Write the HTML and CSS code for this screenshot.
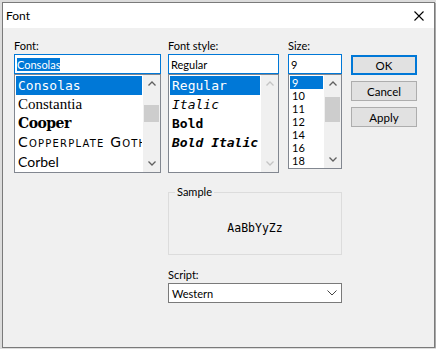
FILE: index.html
```html
<!DOCTYPE html>
<html lang="en">
<head>
    <meta charset="UTF-8">
    <title>Font</title>
    <link rel="stylesheet" href="styles.css">
</head>
<body>
    <div class="dialog">
        <div class="titlebar">
            <span class="title">Font</span>
            <svg class="close" width="10" height="10" viewBox="0 0 10 10">
                <path d="M0.5 0.5 L9.5 9.5 M9.5 0.5 L0.5 9.5" stroke="#000" stroke-width="1.1" fill="none"/>
            </svg>
        </div>
        <div class="content">
            <div class="top">
                <div class="col col-font">
                    <label>Font:</label>
                    <div class="field"><span class="sel">Consolas</span></div>
                    <div class="list list-font">
                        <ul class="items">
                            <li class="active f-consolas">Consolas</li>
                            <li class="f-constantia">Constantia</li>
                            <li class="f-cooper">Cooper</li>
                            <li class="f-copper">Copperplate Gothic</li>
                            <li class="f-corbel">Corbel</li>
                        </ul>
                        <div class="scroll">
                            <div class="arrow"><svg width="8" height="5" viewBox="0 0 8 5"><path d="M0.5 4.5 L4 1 L7.5 4.5" stroke="#606060" stroke-width="1.3" fill="none"/></svg></div>
                            <div class="track"><div class="thumb thumb-font"></div></div>
                            <div class="arrow"><svg width="8" height="5" viewBox="0 0 8 5"><path d="M0.5 0.5 L4 4 L7.5 0.5" stroke="#606060" stroke-width="1.3" fill="none"/></svg></div>
                        </div>
                    </div>
                </div>
                <div class="col col-style">
                    <label>Font style:</label>
                    <div class="field">Regular</div>
                    <div class="list list-style">
                        <ul class="items mono">
                            <li class="active">Regular</li>
                            <li class="i">Italic</li>
                            <li class="b">Bold</li>
                            <li class="b i">Bold Italic</li>
                        </ul>
                        <div class="scroll">
                            <div class="arrow"><svg width="8" height="5" viewBox="0 0 8 5"><path d="M0.5 4.5 L4 1 L7.5 4.5" stroke="#c4c4c4" stroke-width="1.3" fill="none"/></svg></div>
                            <div class="track"></div>
                            <div class="arrow"><svg width="8" height="5" viewBox="0 0 8 5"><path d="M0.5 0.5 L4 4 L7.5 0.5" stroke="#c4c4c4" stroke-width="1.3" fill="none"/></svg></div>
                        </div>
                    </div>
                </div>
                <div class="col col-size">
                    <label>Size:</label>
                    <div class="field">9</div>
                    <div class="list list-size">
                        <ul class="items">
                            <li class="active">9</li>
                            <li>10</li>
                            <li>11</li>
                            <li>12</li>
                            <li>14</li>
                            <li>16</li>
                            <li>18</li>
                        </ul>
                        <div class="scroll">
                            <div class="arrow"><svg width="8" height="5" viewBox="0 0 8 5"><path d="M0.5 4.5 L4 1 L7.5 4.5" stroke="#606060" stroke-width="1.3" fill="none"/></svg></div>
                            <div class="track"><div class="thumb thumb-size"></div></div>
                            <div class="arrow"><svg width="8" height="5" viewBox="0 0 8 5"><path d="M0.5 0.5 L4 4 L7.5 0.5" stroke="#606060" stroke-width="1.3" fill="none"/></svg></div>
                        </div>
                    </div>
                </div>
                <div class="buttons">
                    <button class="default">OK</button>
                    <button>Cancel</button>
                    <button>Apply</button>
                </div>
            </div>
            <div class="lower">
                <fieldset class="sample">
                    <legend>Sample</legend>
                    <div class="sample-text">AaBbYyZz</div>
                </fieldset>
                <label class="script-label">Script:</label>
                <div class="combo">
                    <span>Western</span>
                    <svg width="10" height="6" viewBox="0 0 10 6"><path d="M0.5 0.5 L5 5 L9.5 0.5" stroke="#444" stroke-width="1" fill="none"/></svg>
                </div>
            </div>
        </div>
    </div>
</body>
</html>
```

FILE: styles.css
```css
body {
    margin: 0;
    background-color: #dcdcdc;
    font-family: Lato, "Noto Sans", sans-serif;
    font-size: 11px;
    color: #000;
}
.dialog {
    margin: 2px 0 0 2px;
    width: 431px;
    height: 344px;
    border: 1px solid #7a7a7a;
    background-color: #f0f0f0;
    box-shadow: 1px 1px 0 #a8a8a8;
}
.titlebar {
    height: 25px;
    background-color: #fff;
    display: flex;
    align-items: center;
    justify-content: space-between;
    padding: 0 10px 0 3px;
}
.titlebar .title {
    font-size: 12px;
}
.content {
    padding: 10px 0 0 11px;
}
.top {
    display: flex;
    align-items: flex-start;
}
.col {
    display: flex;
    flex-direction: column;
}
.col-font { width: 147px; }
.col-style { width: 111px; margin-left: 7px; }
.col-size { width: 54px; margin-left: 9px; }
label {
    display: block;
    line-height: 16px;
    height: 16px;
}
.field {
    box-sizing: border-box;
    height: 20px;
    border: 1px solid #0078d7;
    background-color: #fff;
    padding: 0 2px;
    display: flex;
    align-items: center;
}
.field .sel {
    background-color: #0078d7;
    color: #fff;
    line-height: 13px;
}
.list {
    box-sizing: border-box;
    border: 1px solid #828790;
    background-color: #fff;
    display: flex;
}
.list-font, .list-style { height: 99px; }
.list-size { height: 95px; }
.items {
    list-style: none;
    margin: 0;
    padding: 1px;
    flex: 1;
    min-width: 0;
    overflow: hidden;
}
.items li {
    padding-left: 2px;
    white-space: nowrap;
    overflow: hidden;
    line-height: 19px;
    height: 19px;
}
.list-size .items li {
    line-height: 13px;
    height: 13px;
}
.items li.active {
    background-color: #0078d7;
    color: #fff;
}
.f-consolas { font-family: "DejaVu Sans Mono", monospace; font-size: 13px; }
.f-constantia { font-family: "Liberation Serif", serif; font-size: 15px; }
.f-cooper { font-family: "DejaVu Serif", serif; font-size: 14px; font-weight: bold; letter-spacing: -0.5px; }
.f-copper { font-family: "DejaVu Sans", sans-serif; font-size: 14px; font-variant: small-caps; letter-spacing: 1.2px; }
.f-corbel { font-family: Lato, sans-serif; font-size: 14px; }
.mono { font-family: "DejaVu Sans Mono", monospace; font-size: 13px; }
.mono .i { font-style: italic; }
.mono .b { font-weight: bold; }
.scroll {
    width: 17px;
    flex-shrink: 0;
    background-color: #f0f0f0;
    display: flex;
    flex-direction: column;
}
.arrow {
    height: 17px;
    display: flex;
    align-items: center;
    justify-content: center;
}
.track {
    flex: 1;
}
.thumb {
    margin: 0 1px;
    background-color: #cdcdcd;
}
.thumb-font { margin-top: 13px; height: 17px; }
.thumb-size { margin-top: 5px; height: 25px; }
.buttons {
    width: 66px;
    margin-left: 9px;
    padding-top: 17px;
    display: flex;
    flex-direction: column;
    gap: 6px;
}
.buttons button {
    box-sizing: border-box;
    height: 20px;
    border: 1px solid #adadad;
    background-color: #e1e1e1;
    font-family: Lato, "Noto Sans", sans-serif;
    font-size: 11.5px;
    color: #000;
    padding: 0;
}
.buttons button.default {
    border: 2px solid #0078d7;
}
.lower {
    margin-left: 154px;
    width: 174px;
}
.sample {
    box-sizing: border-box;
    margin: 12px 0 0 0;
    width: 174px;
    height: 70px;
    padding: 0 6px;
    border: 1px solid #dcdcdc;
    min-inline-size: 0;
}
.sample legend {
    padding: 0 2px;
    line-height: 14px;
}
.sample-text {
    box-sizing: border-box;
    height: 55px;
    padding-top: 2px;
    display: flex;
    align-items: center;
    justify-content: center;
    font-family: "DejaVu Sans Mono", monospace;
    font-size: 11.5px;
}
.script-label {
    margin-top: 12px;
}
.combo {
    box-sizing: border-box;
    height: 20px;
    border: 1px solid #7a7a7a;
    background-color: #fff;
    display: flex;
    align-items: center;
    justify-content: space-between;
    padding: 0 4px 0 3px;
}
```
